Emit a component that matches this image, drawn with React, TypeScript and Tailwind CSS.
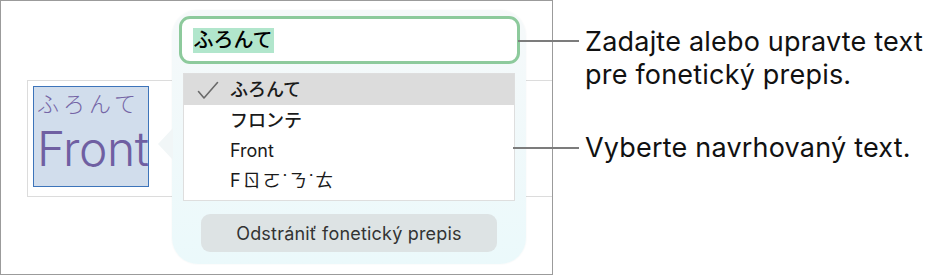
const options = ['ふろんて', 'フロンテ', 'Front', 'Fㄖㄛ˙ㄋ˙ㄊ'];

export default function App() {
    return (
        <div
            className="relative flex w-[939px] h-[277px] bg-white text-black"
            style={{ fontFamily: 'Inter, "Noto Sans CJK JP", sans-serif' }}
        >
            {/* screenshot frame */}
            <div className="relative w-[553px] h-[275px] border border-[#9b9b9b] overflow-hidden">
                <div className="mt-[79px] ml-[26px] h-[117px] border-y border-l border-[#dcdcdc] pt-[5px] pl-[5px]">
                    <div className="w-[116px] h-[101px] bg-[#d1ddec] border-[1.5px] border-[#3d74ba] flex flex-col items-start pl-[3px] overflow-hidden">
                        <div className="text-[22px] leading-none mt-[6px] tracking-[4px] text-[#7565a6] font-light">ふろんて</div>
                        <div className="text-[48px] leading-none mt-[10px] text-[#6f5fa2] font-light tracking-[-0.5px]">Front</div>
                    </div>
                </div>

                {/* popover */}
                <div className="absolute left-[171px] top-[9px] w-[354px] h-[254px] rounded-[26px] bg-gradient-to-b from-[#f6f9fa] to-[#ebf9fb] shadow-[0_0_2px_rgba(0,0,0,0.06)] flex flex-col items-center pt-[6px]">
                    <div className="absolute -left-[14px] top-[118px] w-0 h-0 border-y-[16px] border-y-transparent border-r-[15px] border-r-[#f1f6f7]" />
                    <div className="w-[341px] h-[48px] rounded-[11px] border-[3px] border-[#8dca9c] bg-white flex items-center pl-[11px]">
                        <span className="bg-[#b1e6cc] text-[20px] leading-[25px] px-[1px] font-medium">ふろんて</span>
                    </div>
                    <div className="mt-[9px] w-[332px] h-[128px] bg-white border border-[#dedede] flex flex-col">
                        {options.map((o, i) => (
                            <div
                                key={o}
                                className={`relative h-[30px] flex items-center pl-[46px] text-[18px] text-[#1a1a1a] ${i === 0 ? 'bg-[#dcdcdc] h-[31px]' : ''}`}
                            >
                                {i === 0 && (
                                    <svg className="absolute left-[13px] top-[7px]" width="22" height="19" viewBox="0 0 22 19" fill="none">
                                        <path d="M1.5 10.5 L7 17 L20.5 1.5" stroke="#6a6a6a" strokeWidth="1.6" strokeLinecap="round" strokeLinejoin="round" />
                                    </svg>
                                )}
                                <span className={i === 3 ? 'tracking-[2px]' : i === 2 ? '' : 'font-medium'}>{o}</span>
                            </div>
                        ))}
                    </div>
                    <button className="mt-[13px] w-[296px] h-[38px] rounded-[9px] bg-[#dde3e4] text-[18px] tracking-[0.2px] text-[#333]">
                        Odstrániť fonetický prepis
                    </button>
                </div>
            </div>

            {/* callout lines */}
            <div className="absolute left-[518px] top-[40px] w-[61px] h-[1.5px] bg-[#7c7c7c]" />
            <div className="absolute left-[513px] top-[147px] w-[66px] h-[1.5px] bg-[#7c7c7c]" />

            {/* callout texts */}
            <div className="pl-[32px] pt-[25px] text-[27px] leading-[33px] tracking-[0.2px] text-[#111]">
                <p>Zadajte alebo upravte text</p>
                <p>pre fonetický prepis.</p>
                <p className="mt-[40px]">Vyberte navrhovaný text.</p>
            </div>
        </div>
    );
}
